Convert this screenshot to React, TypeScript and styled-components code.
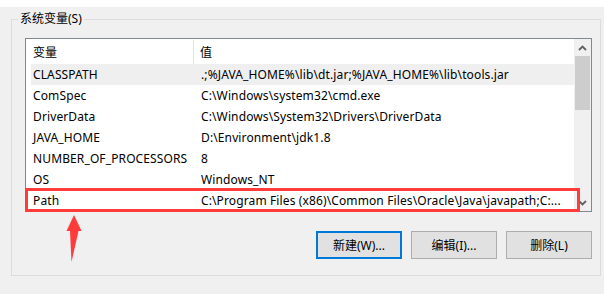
import React from "react";
import styled, { createGlobalStyle } from "styled-components";

const Global = createGlobalStyle`
  html, body { margin: 0; padding: 0; background: #f0f0f0; }
  body {
    width: 604px; height: 294px; overflow: hidden;
    font-family: "Noto Sans", "Noto Sans CJK SC", sans-serif;
    font-size: 12px; color: #000;
  }
`;

const Page = styled.div`
  position: relative;
  width: 604px;
  height: 294px;
  background: #f0f0f0;
`;

const TopStrip = styled.div`
  height: 7px;
  background: #ffffff;
`;

const Group = styled.fieldset`
  margin: 4px 0 0 11px;
  padding: 0 10px 16px 13px;
  width: 590px;
  box-sizing: border-box;
  border: 1px solid #dcdcdc;
  min-width: 0;
`;

const Legend = styled.legend`
  margin-left: -7px;
  padding: 0 2px;
  line-height: 16px;
  height: 16px;
  font-size: 12px;
`;

const ListBox = styled.div`
  margin-top: 11px;
  width: 567px;
  height: 174px;
  box-sizing: border-box;
  border: 1px solid #828790;
  background: #fff;
  display: grid;
  grid-template-columns: 1fr 17px;
  overflow: hidden;
`;

const ListContent = styled.div`
  display: flex;
  flex-direction: column;
  overflow: hidden;
`;

const HeaderRow = styled.div`
  display: grid;
  grid-template-columns: 168px 1fr;
  height: 25px;
  flex: none;
`;

const HeaderCell = styled.div<{ $divider?: boolean; $pad: number }>`
  display: flex;
  align-items: center;
  padding-left: ${(p) => p.$pad}px;
  border-right: ${(p) => (p.$divider ? "1px solid #e5e5e5" : "none")};
  height: 24px;
  margin-top: 1px;
`;

const Row = styled.div<{ $hot?: boolean }>`
  display: grid;
  grid-template-columns: 168px 1fr;
  height: 21px;
  flex: none;
  margin-left: 5px;
  align-items: center;
  background: ${(p) => (p.$hot ? "#efefef" : "transparent")};
  white-space: nowrap;
`;

const Cell = styled.div`
  padding-left: 2px;
  overflow: hidden;
  white-space: nowrap;
  letter-spacing: 0.12px;
`;

const Scrollbar = styled.div`
  background: #f0f0f0;
  display: flex;
  flex-direction: column;
  align-items: center;
`;

const ArrowBtn = styled.div`
  height: 17px;
  width: 17px;
  display: flex;
  align-items: center;
  justify-content: center;
  flex: none;
`;

const Thumb = styled.div`
  width: 15px;
  height: 54px;
  background: #cdcdcd;
  flex: none;
`;

const Spacer = styled.div`
  flex: 1;
`;

const ButtonRow = styled.div`
  display: flex;
  justify-content: flex-end;
  gap: 9px;
  margin-top: 19px;
  width: 567px;
`;

const Button = styled.button<{ $default?: boolean }>`
  width: 86px;
  height: 28px;
  box-sizing: border-box;
  background: #e1e1e1;
  border: ${(p) => (p.$default ? "2px solid #0078d7" : "1px solid #adadad")};
  font-family: "Noto Sans", "Noto Sans CJK SC", sans-serif;
  font-size: 12px;
  color: #000;
  padding: 0;
  margin: 0;
`;

const Highlight = styled.div`
  position: absolute;
  left: 25px;
  top: 188px;
  width: 555px;
  height: 24px;
  box-sizing: border-box;
  border: 3px solid #ff3b3b;
  pointer-events: none;
`;

const ArrowMark = styled.svg`
  position: absolute;
  left: 60px;
  top: 212px;
`;

const rows: [string, string][] = [
  ["CLASSPATH", ".;%JAVA_HOME%\\lib\\dt.jar;%JAVA_HOME%\\lib\\tools.jar"],
  ["ComSpec", "C:\\Windows\\system32\\cmd.exe"],
  ["DriverData", "C:\\Windows\\System32\\Drivers\\DriverData"],
  ["JAVA_HOME", "D:\\Environment\\jdk1.8"],
  ["NUMBER_OF_PROCESSORS", "8"],
  ["OS", "Windows_NT"],
  ["Path", "C:\\Program Files (x86)\\Common Files\\Oracle\\Java\\javapath;C:..."],
];

const Chevron = ({ down }: { down?: boolean }) => (
  <svg width="9" height="6" viewBox="0 0 9 6">
    <path
      d={down ? "M1 1 L4.5 4.5 L8 1" : "M1 5 L4.5 1.5 L8 5"}
      fill="none"
      stroke="#606060"
      strokeWidth="1.8"
    />
  </svg>
);

export default function App() {
  return (
    <Page>
      <Global />
      <TopStrip />
      <Group>
        <Legend>系统变量(S)</Legend>
        <ListBox>
          <ListContent>
            <HeaderRow>
              <HeaderCell $divider $pad={7}>变量</HeaderCell>
              <HeaderCell $pad={6}>值</HeaderCell>
            </HeaderRow>
            {rows.map(([k, v], i) => (
              <Row key={k} $hot={i === 0}>
                <Cell>{k}</Cell>
                <Cell>{v}</Cell>
              </Row>
            ))}
          </ListContent>
          <Scrollbar>
            <ArrowBtn>
              <Chevron />
            </ArrowBtn>
            <Thumb />
            <Spacer />
            <ArrowBtn>
              <Chevron down />
            </ArrowBtn>
          </Scrollbar>
        </ListBox>
        <ButtonRow>
          <Button $default>新建(W)...</Button>
          <Button>编辑(I)...</Button>
          <Button>删除(L)</Button>
        </ButtonRow>
      </Group>
      <Highlight />
      <ArrowMark width="26" height="54" viewBox="60 212 26 54">
        <path d="M74 215 L81.5 231 L78.5 231 L71.5 262 L70 231 L66.5 231 Z" fill="#ff3b3b" />
      </ArrowMark>
    </Page>
  );
}
